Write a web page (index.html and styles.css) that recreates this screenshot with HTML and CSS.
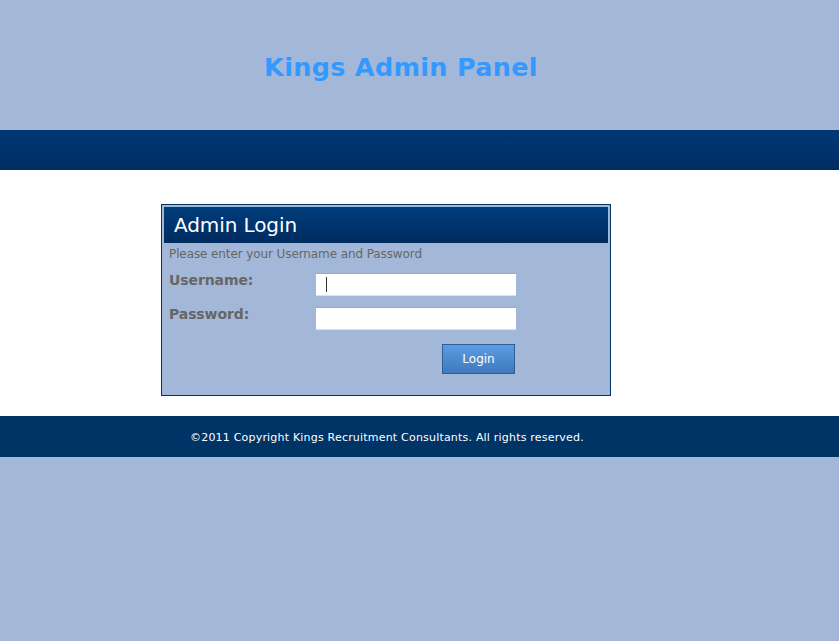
FILE: index.html
```html
<!DOCTYPE html>
<html>
<head>
<meta charset="utf-8">
<title>Kings Admin Panel</title>
<link rel="stylesheet" href="styles.css">
</head>
<body>
<div class="header">
  <h1 class="title">Kings Admin Panel</h1>
</div>
<div class="band"></div>
<div class="main">
  <div class="login-box">
    <div class="login-head">Admin Login</div>
    <div class="login-sub">Please enter your Username and Password</div>
    <div class="row">
      <label class="label">Username:</label>
      <div class="input"><span class="caret"></span></div>
    </div>
    <div class="row">
      <label class="label">Password:</label>
      <div class="input"></div>
    </div>
    <div class="actions">
      <button class="btn">Login</button>
    </div>
  </div>
</div>
<div class="footer">
  <div class="footer-text">©2011 Copyright Kings Recruitment Consultants. All rights reserved.</div>
</div>
</body>
</html>
```
FILE: styles.css
```css
html, body {
  margin: 0;
  padding: 0;
}
body {
  background: #a3b8d8;
  font-family: "DejaVu Sans", Verdana, sans-serif;
  min-height: 641px;
}
.header {
  height: 130px;
  display: flex;
  justify-content: center;
  align-items: flex-start;
  box-sizing: border-box;
}
.title {
  margin: 52px 0 0 -37px;
  font-size: 25.5px;
  font-weight: bold;
  color: #3399ff;
  letter-spacing: 0.3px;
}
.band {
  height: 40px;
  background: linear-gradient(#003875, #002d63);
}
.main {
  background: #ffffff;
  padding: 34px 0 20px 161px;
}
.login-box {
  border: 1px solid #003366;
  background: #a3b8d8;
  padding: 2px;
  box-sizing: content-box;
  width: 444px;
  height: 186px;
}
.login-head {
  height: 36px;
  background: linear-gradient(#003d7c, #002c60);
  color: #ffffff;
  font-size: 20px;
  line-height: 36px;
  padding-left: 10px;
  letter-spacing: -0.1px;
}
.login-sub {
  color: #666666;
  font-size: 12px;
  margin: 4px 0 0 5px;
  letter-spacing: -0.1px;
}
.row {
  display: flex;
  align-items: flex-start;
  height: 34px;
}
.login-sub + .row {
  margin-top: 12px;
}
.label {
  width: 147px;
  padding-left: 5px;
  color: #666666;
  font-weight: bold;
  font-size: 14px;
  line-height: 16px;
  margin-top: -1px;
  letter-spacing: -0.1px;
}
.input {
  width: 200px;
  height: 23px;
  background: #ffffff;
  border-top: 1px solid #a8a8a8;
  border-bottom: 1px solid #e0e0e0;
  box-sizing: border-box;
  position: relative;
}
.caret {
  position: absolute;
  left: 10px;
  top: 3px;
  width: 1px;
  height: 15px;
  background: #333;
}
.actions {
  display: flex;
  padding-left: 278px;
  margin-top: 3px;
}
.btn {
  width: 73px;
  height: 30px;
  border: 1px solid #2d5f96;
  background: linear-gradient(#5c9ce3, #4079bb);
  color: #ffffff;
  font-family: "DejaVu Sans", Verdana, sans-serif;
  font-size: 12px;
  padding: 0;
  margin: 0;
}
.footer {
  height: 41px;
  background: #003366;
  display: flex;
  align-items: center;
  padding-left: 190px;
}
.footer-text {
  color: #ffffff;
  font-size: 11px;
  letter-spacing: 0.2px;
  padding-top: 1px;
}
```
